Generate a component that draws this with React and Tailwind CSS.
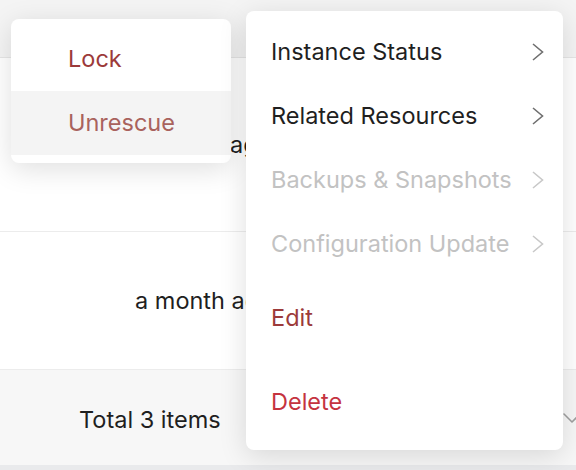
import { ChevronDown } from 'lucide-react'

const actions = [
  { name: 'Instance Status', sub: true, tone: 'text-[#1f1f1f]', chev: 'text-[#6f6f6f]', h: 'h-16' },
  { name: 'Related Resources', sub: true, tone: 'text-[#1f1f1f]', chev: 'text-[#6f6f6f]', h: 'h-16' },
  { name: 'Backups & Snapshots', sub: true, tone: 'text-[#c2c2c2]', chev: 'text-[#c8c8c8]', h: 'h-16' },
  { name: 'Configuration Update', sub: true, tone: 'text-[#c2c2c2]', chev: 'text-[#c8c8c8]', h: 'h-16' },
  { name: 'Edit', tone: 'text-[#9c3a3a]', h: 'h-[84px]' },
  { name: 'Delete', tone: 'text-[#c5333f]', h: 'h-[84px]' },
]

function Chevron({ className }) {
  return (
    <svg viewBox="0 0 12 18" className={`h-[18px] w-3 ${className}`} fill="none" stroke="currentColor" strokeWidth="1.6">
      <polyline points="1,1 10.5,9 1,17" />
    </svg>
  )
}

export default function App() {
  return (
    <div className="relative h-[470px] w-[576px] overflow-hidden bg-white font-['Inter','Liberation_Sans',sans-serif] text-[23.5px] text-[#1f1f1f]">
      {/* table behind the menus */}
      <div className="flex h-full flex-col">
        <div className="h-[58px] border-b border-[#e6e6e6] bg-[#f4f4f4]" />
        <div className="flex h-[174px] items-center border-b border-[#ececec] pl-[120px]">2 months ago</div>
        <div className="flex h-[138px] items-center border-b border-[#ececec] pl-[135px]">a month ago</div>
        <div className="flex h-[95px] items-center justify-between bg-[#f7f7f7] pl-[79px]">
          <span className="pt-1">Total 3 items</span>
          <ChevronDown className="-mr-3 h-8 w-8 text-[#a0a0a0]" strokeWidth={1.2} />
        </div>
        <div className="flex-1 bg-[#e9eaec]" />
      </div>

      {/* secondary menu */}
      <div className="absolute left-[11px] top-[19px] w-[220px] rounded-lg bg-white py-2 shadow-[0_6px_28px_rgba(0,0,0,0.13)]">
        <div className="flex h-16 items-center pl-[57px] text-[#9c3a3a]">Lock</div>
        <div className="flex h-16 items-center bg-[#f4f4f4] pl-[57px] text-[#a9625d]">Unrescue</div>
      </div>

      {/* main action menu */}
      <div className="absolute left-[246px] top-[11px] w-[317px] rounded-lg bg-white pb-[6px] pt-[9px] shadow-[0_6px_28px_rgba(0,0,0,0.13)]">
        {actions.map((a) => (
          <div key={a.name} className={`flex ${a.h} items-center justify-between pl-[25px] pr-[19px] ${a.tone}`}>
            <span>{a.name}</span>
            {a.sub && <Chevron className={a.chev} />}
          </div>
        ))}
      </div>
    </div>
  )
}
